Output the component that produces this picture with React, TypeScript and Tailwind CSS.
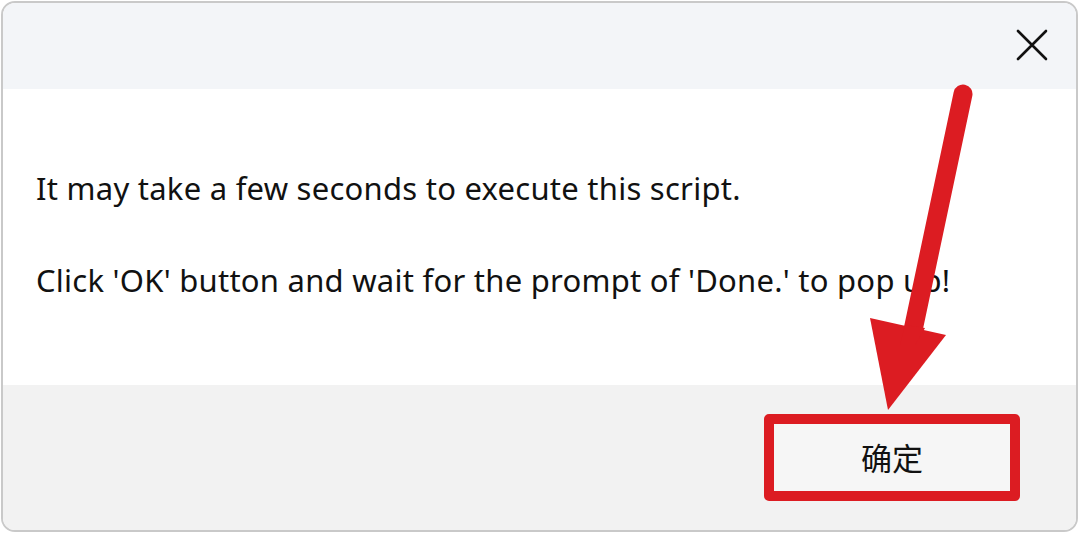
import React from "react";

export default function App() {
  return (
    <div className="relative w-[1080px] h-[534px] bg-white overflow-hidden" style={{ fontFamily: '"Noto Sans", "Noto Sans CJK SC", sans-serif' }}>
      <div className="absolute inset-0 m-[1px] mr-[2px] mb-[2px] rounded-[14px] border-2 border-[#c9c9c9] overflow-hidden flex flex-col">
        <div className="h-[86px] bg-[#f3f5f8] flex justify-end items-start pt-[25px] pr-[27px]">
          <svg width="34" height="34" viewBox="0 0 34 34">
            <path d="M3 3 L31 31 M31 3 L3 31" stroke="#111" strokeWidth="2.6" strokeLinecap="round" fill="none" />
          </svg>
        </div>
        <div className="h-[296px] bg-white flex flex-col pl-[33px] pt-[79px] text-[31px] tracking-[0.25px] text-[#111] leading-[40px] gap-[52px]">
          <p>It may take a few seconds to execute this script.</p>
          <p>Click 'OK' button and wait for the prompt of 'Done.' to pop up!</p>
        </div>
        <div className="flex-1 bg-[#f2f2f2] flex justify-end items-start pt-[29px] pr-[56px]">
          <div className="w-[256px] h-[87px] rounded-[5px] border-[10px] border-[#dc1c22] bg-[#f6f6f6] flex items-center justify-center text-[31px] text-[#111]" style={{ fontFamily: '"Noto Sans CJK SC", sans-serif' }}>
            确定
          </div>
        </div>
      </div>
      <svg className="absolute inset-0 pointer-events-none" width="1080" height="534" viewBox="0 0 1080 534">
        <line x1="963" y1="94" x2="912" y2="335" stroke="#dc1c22" strokeWidth="19" strokeLinecap="round" />
        <polygon points="870,318 946,335 888,410" fill="#dc1c22" />
        <polygon points="905,325 925,328 915,345 900,345" fill="#dc1c22" />
      </svg>
    </div>
  );
}
